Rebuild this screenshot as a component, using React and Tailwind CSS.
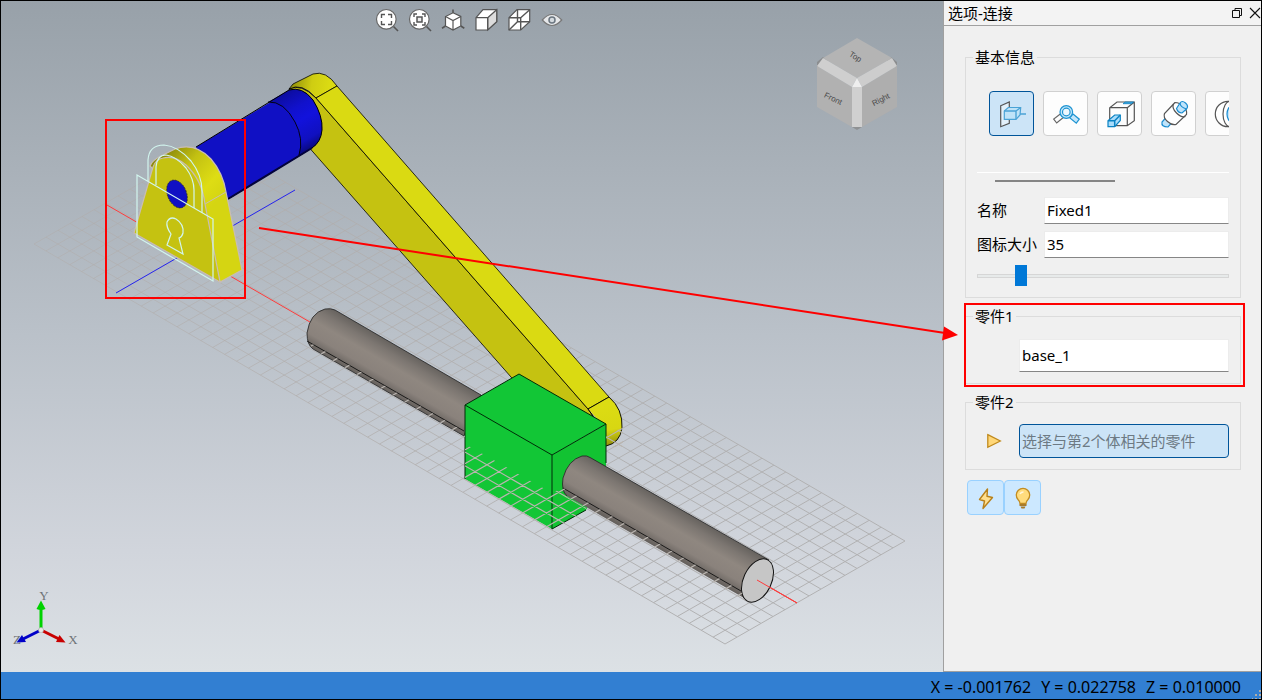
import React, { useState } from 'react';

const GRID_U = 58;
const GRID_V = 15;

// corners of the ground grid: left, right, bottom
const L = [34, 244];
const R = [905, 541];
const B = [725, 644];

const gridPath = () => {
  const u = [B[0] - L[0], B[1] - L[1]];
  const v = [R[0] - B[0], R[1] - B[1]];
  let d = '';
  for (let i = 0; i <= GRID_U; i++) {
    const x = L[0] + (u[0] * i) / GRID_U;
    const y = L[1] + (u[1] * i) / GRID_U;
    d += `M${x} ${y}l${v[0]} ${v[1]}`;
  }
  for (let j = 0; j <= GRID_V; j++) {
    const x = L[0] + (v[0] * j) / GRID_V;
    const y = L[1] + (v[1] * j) / GRID_V;
    d += `M${x} ${y}l${u[0]} ${u[1]}`;
  }
  return d;
};

const GRID = gridPath();

const NavCube = () => (
  <g>
    <path d="M817 62l6-5 5 3-11 8zM897 62l-6-5-5 3 11 8z" fill="#8b8d8f" />
    <path d="M857 38l35 20-35 20-34-20z" fill="#b4b4b4" />
    <path d="M817 66l35 21v40l-35-20z" fill="#b1b1b1" />
    <path d="M897 66l-35 21v40l35-20z" fill="#aeaeae" />
    <path d="M823 58l34 20-5 9-35-21z" fill="#cfcfcf" />
    <path d="M892 58l-35 20 5 9 35-21z" fill="#cdcdcd" />
    <path d="M852 87h10v40h-10z" fill="#d0d0d0" />
    <path d="M857 78l5 9h-10z" fill="#eeeeee" />
    <path d="M852 127h10l-5 3z" fill="#8f9193" />
    <g fill="#4b4b4b" fontSize="8" fontFamily="'Liberation Sans', Arial, sans-serif" textAnchor="middle">
      <text transform="translate(854 59) rotate(33)">Top</text>
      <text transform="translate(832 101) rotate(26)">Front</text>
      <text transform="translate(882 102) rotate(-27)">Right</text>
    </g>
  </g>
);

const AxisTriad = () => (
  <g>
    <path d="M41 630V608" stroke="#00d200" strokeWidth="3" />
    <path d="M36.500 609q4.500 2 9 0L41 600.500z" fill="#00d200" />
    <path d="M41 630l18 9" stroke="#c80000" strokeWidth="3" />
    <path d="M65.500 642.500l-9.500-.5 3.500-7z" fill="#c80000" />
    <path d="M41 630l-18 9" stroke="#0000c8" strokeWidth="3" />
    <path d="M16.500 642.500l9.500-.5-4-7z" fill="#0000c8" />
    <circle cx="41" cy="630" r="2.500" fill="#e8e8e8" stroke="#aaa" strokeWidth=".6" />
    <g fill="#6f7377" fontSize="13" fontFamily="'Liberation Serif', 'Times New Roman', serif" textAnchor="middle">
      <text x="44" y="600">Y</text>
      <text x="73" y="644">X</text>
      <text x="17" y="644">Z</text>
    </g>
  </g>
);

const Scene = () => (
  <svg
    className="absolute inset-0 size-full"
    viewBox="1 1 942 671"
    preserveAspectRatio="xMinYMin slice"
    fill="none"
    role="img"
    aria-label="3D"
  >
    <defs>
      <linearGradient id="sky" x1="0" y1="0" x2="0" y2="1">
        <stop offset="0" stopColor="#98a1a9" />
        <stop offset=".5" stopColor="#bac1c9" />
        <stop offset=".82" stopColor="#d1d5dc" />
        <stop offset="1" stopColor="#dce1e5" />
      </linearGradient>
      <linearGradient id="gridStroke" gradientUnits="userSpaceOnUse" x1="34" y1="0" x2="640" y2="0">
        <stop offset="0" stopColor="#b0a9a5" stopOpacity=".4" />
        <stop offset="1" stopColor="#b1b1b2" />
      </linearGradient>
      <linearGradient id="rodA" gradientUnits="userSpaceOnUse" x1="331" y1="308" x2="309" y2="346">
        <stop offset="0" stopColor="#67635f" />
        <stop offset=".2" stopColor="#7c7671" />
        <stop offset=".45" stopColor="#8f8780" />
        <stop offset=".75" stopColor="#8a827c" />
        <stop offset="1" stopColor="#66615d" />
      </linearGradient>
      <linearGradient id="rodB" gradientUnits="userSpaceOnUse" x1="588" y1="456" x2="566" y2="494">
        <stop offset="0" stopColor="#67635f" />
        <stop offset=".2" stopColor="#7c7671" />
        <stop offset=".45" stopColor="#8f8780" />
        <stop offset=".75" stopColor="#8a827c" />
        <stop offset="1" stopColor="#66615d" />
      </linearGradient>
      <linearGradient id="shaft" gradientUnits="userSpaceOnUse" x1="285" y1="91" x2="318" y2="148">
        <stop offset="0" stopColor="#0c0c9c" />
        <stop offset=".3" stopColor="#1111cc" />
        <stop offset=".5" stopColor="#1212dc" />
        <stop offset=".8" stopColor="#1010c0" />
        <stop offset="1" stopColor="#07076a" />
      </linearGradient>
      <linearGradient id="baseRim" gradientUnits="userSpaceOnUse" x1="166" y1="153" x2="218" y2="200">
        <stop offset="0" stopColor="#8d8b0c" />
        <stop offset=".35" stopColor="#c3c112" />
        <stop offset=".75" stopColor="#dedd14" />
        <stop offset="1" stopColor="#d5d512" />
      </linearGradient>
      <linearGradient id="armCap" gradientUnits="userSpaceOnUse" x1="292" y1="86" x2="330" y2="92">
        <stop offset="0" stopColor="#96940c" />
        <stop offset=".5" stopColor="#cfcd12" />
        <stop offset="1" stopColor="#dcdc13" />
      </linearGradient>
      <linearGradient id="armEnd" gradientUnits="userSpaceOnUse" x1="606" y1="405" x2="614" y2="446">
        <stop offset="0" stopColor="#dcdc13" />
        <stop offset=".6" stopColor="#d8d712" />
        <stop offset="1" stopColor="#8d8b0c" />
      </linearGradient>
      <clipPath id="belowGround">
        <path d="M465 444l87 49 12-6 3 10 19 11v3l-34 19-87-50z" />
        <path d="M307 341l158 91v5l-152-88zM563 488l178 103 4 9-179-104z" />
        <path d="M606 436l17-9v20h-17z" />
      </clipPath>
    </defs>

    <rect x="1" y="1" width="942" height="671" fill="url(#sky)" />
    <path d={GRID} stroke="url(#gridStroke)" strokeWidth="1" />

    {/* world axes */}
    <path d="M107 205l690 398" stroke="#ff3b3b" strokeWidth="1" />
    <path d="M116 293l179-103" stroke="#2424f0" strokeWidth="1" />

    {/* arm */}
    <path d="M289 89q12-6 27 9l272 311 10 14-50 0-37-46-205-233z" fill="#c5c211" stroke="#000" strokeWidth=".8" />
    <path d="M289 89l4-5 20-10q13-4 24 12l-21 12q-14-16-27-9z" fill="url(#armCap)" stroke="#000" strokeWidth=".8" />
    <path d="M316 98l21-12 272 311-21 12z" fill="#dada12" stroke="#000" strokeWidth=".8" />
    <path d="M588 409l21-12q14 12 13 31-2 15-16 18l-4-22z" fill="url(#armEnd)" />
    <path d="M593 416l-5-7 21-12q14 12 13 31-2 15-16 18" stroke="#000" strokeWidth=".9" />

    {/* shaft */}
    <path d="M196 147l93-56q13-5 24 9 10 16 9 30-1 12-10 18l-84 51z" fill="#1010c4" />
    <path d="M268 102l21-12q13-4 24 10 10 16 9 30-1 12-10 18l-13 7q4-16-4-32-11-21-27-21z" fill="url(#shaft)" />
    <path d="M196 147l93-57q13-4 24 10 10 16 9 30-1 12-10 18l-84 51" stroke="#000" strokeWidth="1" />
    <path d="M312 148l-84 51" stroke="#04043c" strokeWidth="2" />
    <path d="M268 102q16-1 27 20 9 17 4 33" stroke="#000" strokeWidth=".9" />

    {/* base bracket */}
    <path d="M150 166q2-6 13-11l12-6q20-7 36 10 12 14 15 33l16 78-22 12-14-60z" fill="url(#baseRim)" stroke="#c9bdb4" strokeWidth="1.200" />
    <path d="M134 233l19-66q3-8 10-9 12-3 23 7 16 15 19 39l15 78z" fill="#c5c211" stroke="#c9bdb4" strokeWidth="1.200" />
    <path d="M205 204l21-12" stroke="#c9bdb4" />
    <ellipse cx="177" cy="194" rx="9.500" ry="14.500" transform="rotate(-22 177 194)" fill="#1010c4" stroke="#222" strokeDasharray="2 1" strokeWidth=".7" />

    {/* lock outline */}
    <g stroke="#d2f5ee" strokeWidth="1.200">
      <path d="M137 175l76 44v62l-76-44z" />
      <path d="M148 181v-21q1-15 16-15 14 1 27 16 11 14 11 30v22" />
      <path d="M156 185v-18q1-12 10-12 10 1 20 13 8 11 8 22v18" />
      <path d="M171 234q-5-7-4-12 3-6 9-3 8 5 7 14-1 4-4 5l4 16-16-9z" />
    </g>

    {/* guide rod, rear half */}
    <path d="M464 436l-151-87q-6-4-6-16 3-20 18-24 6-1 10 1l146 85z" fill="url(#rodA)" stroke="#222" strokeWidth=".8" />
    <path d="M307 341l157 90" stroke="#111" strokeWidth=".9" />

    {/* slider block */}
    <path d="M519 374l87 50-54 31-87-50zM465 405l87 50v74l-87-50z" fill="#12c636" />
    <path d="M552 455l54-31v45l-20 41-34 19z" fill="#12c332" />
    <path d="M606 463v-39l-87-50-54 31v74M465 405l87 50v74l34-19M552 455l54-31" stroke="#002b08" strokeWidth="1" />

    {/* guide rod, front half */}
    <path d="M751 602L567 496q-6-5-4-18 5-18 19-22 6-1 9 2l178 102z" fill="url(#rodB)" />
    <path d="M769 560L591 458q-4-3-9-2-14 4-19 22-2 13 4 18" stroke="#222" strokeWidth=".8" />
    <path d="M563 488l178 103" stroke="#111" strokeWidth=".9" />
    <ellipse cx="757.500" cy="580.500" rx="14" ry="23" transform="rotate(25 757.500 580.500)" fill="#c6c6c6" stroke="#111" />
    <path d="M757 580l40 23" stroke="#ff3b3b" />

    <g clipPath="url(#belowGround)">
      <path d={GRID} stroke="#bab5b0" strokeWidth="1.200" />
    </g>

    <NavCube />
    <AxisTriad />
  </svg>
);

const ViewIcon = ({ children }) => (
  <svg width="24" height="24" viewBox="0 0 24 24" fill="#fff" stroke="#555" strokeWidth="1.200">
    {children}
  </svg>
);

const viewTools = [
  {
    name: 'Fit all',
    icon: (
      <ViewIcon>
        <path d="M18.500 18.500L23 23" strokeWidth="1.600" />
        <circle cx="11.300" cy="11.300" r="9.800" stroke="#666" />
        <path d="M6.500 10V6.500H10M13 6.500h3.500V10M16.500 13v3.500H13M10 16.500H6.500V13" fill="none" strokeWidth="1.400" />
      </ViewIcon>
    ),
  },
  {
    name: 'Fit selection',
    icon: (
      <ViewIcon>
        <path d="M18.500 18.500L23 23" strokeWidth="1.600" />
        <circle cx="11.300" cy="11.300" r="9.800" stroke="#666" />
        <path d="M6 9V6h3M14 6h3v3M17 14v3h-3M9 17H6v-3" fill="none" strokeWidth="1.400" />
        <rect x="9" y="9" width="5" height="5" fill="#eee" strokeWidth="1.500" />
      </ViewIcon>
    ),
  },
  {
    name: 'Isometric',
    icon: (
      <ViewIcon>
        <path d="M12 5V1.500M4.500 18l-3.500 2.200M19.800 18l3.500 2.200" strokeWidth="1.600" />
        <path d="M12 4.800l7.800 3.700V18L12 22l-7.500-4V8.500z" />
        <path d="M4.500 8.500l7.500 4 7.800-4M12 12.500V22" fill="none" />
      </ViewIcon>
    ),
  },
  {
    name: 'Shaded',
    icon: (
      <ViewIcon>
        <path d="M2 9.700l7-8h13.700v12l-9 8.300H2z" />
        <path d="M13.700 9.700l9-8v12l-9 8.300z" fill="#dcdcdc" />
        <path d="M2 9.700h11.700V22" fill="none" />
      </ViewIcon>
    ),
  },
  {
    name: 'Wireframe',
    icon: (
      <ViewIcon>
        <path d="M2 9.700l8-8h12.700v12l-9 8.300H2z" />
        <path d="M2 9.700h11.700V22M13.700 9.700l9-8M10.500 1.700v12M2 22l8.500-8.300h12.200" fill="none" strokeWidth="1.400" />
      </ViewIcon>
    ),
  },
  {
    name: 'Visibility',
    icon: (
      <ViewIcon>
        <path d="M2.300 12Q12 1 21.700 12 12 23 2.300 12z" fill="#e6e8ea" stroke="#777" />
        <circle cx="12" cy="12" r="3" fill="#d4dade" stroke="#6b7680" strokeWidth="1.500" />
      </ViewIcon>
    ),
  },
];

const JointIcon = ({ children }) => (
  <svg width="45" height="45" viewBox="0 0 45 45" fill="none" stroke="#555" strokeWidth="1.200" className="-m-px shrink-0">
    {children}
  </svg>
);

const joints = [
  {
    name: 'Fixed',
    icon: (
      <JointIcon>
        <path d="M11.700 14.700l8.600-3.700v21.300l-8.600 3.400z" fill="#e3f0fa" />
        <g stroke="#4ba3d6" fill="#bfe3f8">
          <path d="M15.300 20l4-3.500h12.400L31 24l-4 4.300H15.300z" />
          <path d="M15.300 20H27v8.300M27 20l4.700-3.500M31 23h6" strokeWidth="1.400" fill="none" />
        </g>
      </JointIcon>
    ),
  },
  {
    name: 'Revolute',
    icon: (
      <JointIcon>
        <path d="M17.300 23l-6.600 5 3 4 6.300-5.200" stroke="#666" />
        <g stroke="#1e94d2" fill="#c4e6fa">
          <path d="M30 23l6.300 5.200-3 4-6.700-5.500z" />
          <circle cx="23.300" cy="21" r="6.300" />
          <circle cx="23.300" cy="21" r="3.800" fill="#eef8fe" />
        </g>
      </JointIcon>
    ),
  },
  {
    name: 'Translational',
    icon: (
      <JointIcon>
        <path d="M12.700 29V16.700L20 11h17.300v18.700l-7 5H18M12.700 16.700h17.600v18M30.300 16.700l7-5.700" />
        <path d="M28 11h8.500l-2 1.700h-8.500z" stroke="#0b83c4" fill="#49a8dc" strokeWidth=".8" />
        <path d="M11 29.700l6.700-5.700h5.600v5.500l-5.600 6.200H11z" stroke="#0b83c4" fill="#a9dcfb" />
        <path d="M11 29.700h6.700v6M17.700 29.700l5.600-5.700" stroke="#0b83c4" strokeWidth="1.500" />
      </JointIcon>
    ),
  },
  {
    name: 'Cylindrical',
    icon: (
      <JointIcon>
        <path d="M15.500 26l-4.500 5q-1 5 6 5l4.500-5z" stroke="#1a8cd0" fill="#bfe4fb" />
        <path d="M24 11.500l-10.500 11q-1.500 4 3 8t8.500 3l10.500-10q1-4-3-8t-8.500-4z" fill="#fff" />
        <path d="M22.500 13q-2 4 3 9t9 3.500" />
        <path d="M25.500 17.500l3.500-5.500q2-3 5.500 0t1 6L31 22q-4 0-5.500-4.500z" stroke="#1a8cd0" fill="#bfe4fb" />
        <path d="M29 12q0 4 6.500 6" stroke="#1a8cd0" />
      </JointIcon>
    ),
  },
  {
    name: 'Spherical',
    icon: (
      <JointIcon>
        <circle cx="23" cy="23" r="12.700" fill="#fff" />
        <ellipse cx="25" cy="23" rx="7" ry="12.700" />
        <ellipse cx="27" cy="23" rx="5" ry="8" stroke="#1a8cd0" fill="#bfe4fb" />
      </JointIcon>
    ),
  },
];

const Group = ({ title, className = '', children }) => (
  <fieldset className={`min-w-0 border border-[#dcdcdc] px-[11px] ${className}`}>
    <legend className="-ml-1 px-0.5 leading-[22px]">{title}</legend>
    {children}
  </fieldset>
);

const fieldClass = 'w-full min-w-0 border border-[#ececec] border-b-[#868686] bg-white pb-0.5 pl-0.5 outline-none';

const OptionsPanel = () => {
  const [joint, setJoint] = useState('Fixed');
  const [name, setName] = useState('Fixed1');
  const [size, setSize] = useState(35);
  const [part1, setPart1] = useState('base_1');
  const [part2, setPart2] = useState('');

  return (
    <aside className="flex w-[318px] shrink-0 flex-col border-b border-l border-[#a0a0a0] bg-[#f0f0f0] text-[15px] text-black">
      <header className="flex h-[25px] items-center border-b border-[#a0a0a0] bg-[#f3f3f3] pl-1">
        <h1 className="flex-1 leading-6">选项-连接</h1>
        <button aria-label="Float" className="p-0.5">
          <svg width="12" height="12" viewBox="0 0 12 12" fill="none" stroke="#111">
            <path d="M1.500 3.500h7v7h-7zM4 3.500v-2h6.500v7H8.500" />
          </svg>
        </button>
        <button aria-label="Close" className="py-0.5 pl-1">
          <svg width="12" height="12" viewBox="0 0 12 12" stroke="#111" strokeWidth="1.100">
            <path d="M1 1l10 10M11 1L1 11" />
          </svg>
        </button>
      </header>

      <div className="flex flex-col gap-[7px] py-5 pl-[21px] pr-5">
        <Group title="基本信息" className="pb-[11px] pt-[23px]">
          <div className="flex gap-[9px] overflow-hidden border-b border-white pb-9 pl-3">
            {joints.map((item) => (
              <button
                key={item.name}
                aria-label={item.name}
                aria-pressed={joint === item.name}
                onClick={() => setJoint(item.name)}
                className={`flex size-[45px] shrink-0 rounded-sm border ${
                  joint === item.name ? 'border-[#005499] bg-[#cce4f7]' : 'border-[#d0d0d0] bg-[#fdfdfd]'
                }`}
              >
                {item.icon}
              </button>
            ))}
          </div>
          <div className="ml-[18px] mt-[7px] h-0.5 w-[120px] bg-[#858585]" />

          <div className="mt-[15px] grid grid-cols-[67px_1fr] items-center gap-y-[7px]">
            <label htmlFor="joint-name">名称</label>
            <input id="joint-name" className={`h-[27px] ${fieldClass}`} value={name} onChange={(e) => setName(e.target.value)} />
            <label htmlFor="icon-size">图标大小</label>
            <input
              id="icon-size"
              className={`h-[27px] ${fieldClass}`}
              value={size}
              onChange={(e) => setSize(Number(e.target.value) || 0)}
            />
          </div>
          <input
            type="range"
            aria-label="图标大小"
            min="10"
            max="172"
            value={size}
            onChange={(e) => setSize(Number(e.target.value))}
            className="mt-[7px] block h-[21px] w-full appearance-none bg-transparent [&::-webkit-slider-runnable-track]:h-1 [&::-webkit-slider-runnable-track]:border [&::-webkit-slider-runnable-track]:border-[#d6d6d6] [&::-webkit-slider-runnable-track]:bg-[#e7eaea] [&::-webkit-slider-thumb]:-mt-[10px] [&::-webkit-slider-thumb]:h-[21px] [&::-webkit-slider-thumb]:w-3 [&::-webkit-slider-thumb]:appearance-none [&::-webkit-slider-thumb]:bg-[#0078d7]"
          />
        </Group>

        <Group title="零件1" className="pb-[11px] pt-3">
          <div className="grid grid-cols-[42px_1fr]">
            <input
              aria-label="零件1"
              className={`col-start-2 h-[33px] ${fieldClass}`}
              value={part1}
              onChange={(e) => setPart1(e.target.value)}
            />
          </div>
        </Group>

        <Group title="零件2" className="py-[11px]">
          <div className="grid grid-cols-[42px_1fr] items-center">
            <svg width="16" height="16" viewBox="0 0 16 16" className="ml-[9px]">
              <path d="M1.800 1.700L14.300 8 1.800 14.300z" fill="#ffd778" stroke="#c08a1c" strokeWidth="1.300" />
            </svg>
            <input
              aria-label="零件2"
              placeholder="选择与第2个体相关的零件"
              className="h-[34px] w-full min-w-0 rounded-sm border border-[#005499] bg-[#cce4f7] px-0.5 outline-none placeholder:text-[#6d7a84]"
              value={part2}
              onChange={(e) => setPart2(e.target.value)}
            />
          </div>
        </Group>

        <div className="mt-[3px] flex pl-0.5">
          <button
            aria-label="Apply"
            className="flex h-[35px] w-[37px] items-center justify-center rounded-sm border border-[#99d1ff] bg-[#cce8ff]"
          >
            <svg width="20" height="24" viewBox="0 0 20 24" className="mt-0.5">
              <path d="M11.500 2L3.500 12.500l5 1.500-1.500 7.500 9.500-11-5.500-1.300z" fill="#ffdf8e" stroke="#b8811b" strokeWidth="1.400" strokeLinejoin="round" />
            </svg>
          </button>
          <button
            aria-label="Hint"
            className="flex h-[35px] w-[37px] items-center justify-center rounded-sm border border-[#99d1ff] bg-[#cce8ff]"
          >
            <svg width="20" height="24" viewBox="0 0 20 24" className="mt-0.5">
              <path d="M7 16.500q0-2-2-4a6.700 6.700 0 1 1 10 0q-2 2-2 4z" fill="#ffdc7d" stroke="#c28c22" strokeWidth="1.300" />
              <path d="M7 7q1-2 3.500-2" fill="none" stroke="#fff6dc" strokeWidth="1.500" />
              <path d="M6.500 17h7v2h-7zM7.500 19.500h5l-1 2h-3z" fill="#a87b2b" />
            </svg>
          </button>
        </div>
      </div>
    </aside>
  );
};

// callout boxes and the arrow that links the lock to its part field
const Callouts = () => (
  <svg
    className="pointer-events-none absolute inset-0 size-full"
    viewBox="1 1 1260 698"
    preserveAspectRatio="xMaxYMin meet"
    fill="none"
    stroke="#fe0000"
    strokeWidth="2"
    aria-hidden="true"
  >
    <rect x="106" y="120" width="139" height="178" />
    <rect x="965" y="304" width="279" height="82" />
    <path d="M259 228l686 105" />
    <path d="M958 335l-14-8.500-2 14z" fill="#fe0000" stroke="none" />
  </svg>
);

const App = () => (
  <div className="relative flex min-h-screen flex-col border border-black bg-[#327fd2] font-['Noto_Sans','Noto_Sans_CJK_SC',sans-serif]">
    <div className="flex flex-1">
      <main className="relative min-w-0 flex-1 overflow-hidden">
        <Scene />
        <div className="relative flex justify-center pr-1.5 pt-[7px]">
          {viewTools.map((tool) => (
            <button key={tool.name} aria-label={tool.name} className="flex w-[33px] justify-center">
              {tool.icon}
            </button>
          ))}
        </div>
      </main>
      <OptionsPanel />
    </div>

    <footer className="relative flex h-[27px] items-center justify-end gap-2.5 pr-5 pt-0.5 text-base text-black">
      <span>X = -0.001762</span>
      <span>Y = 0.022758</span>
      <span>Z = 0.010000</span>
      <svg width="9" height="9" viewBox="0 0 9 9" className="absolute bottom-0 right-0" fill="#b0aca6">
        <path d="M7 0h2v2H7zM3 4h2v2H3zM7 4h2v2H7zM-1 8h2v2h-2zM3 8h2v2H3zM7 8h2v2H7z" />
      </svg>
    </footer>

    <Callouts />
  </div>
);

export default App;
